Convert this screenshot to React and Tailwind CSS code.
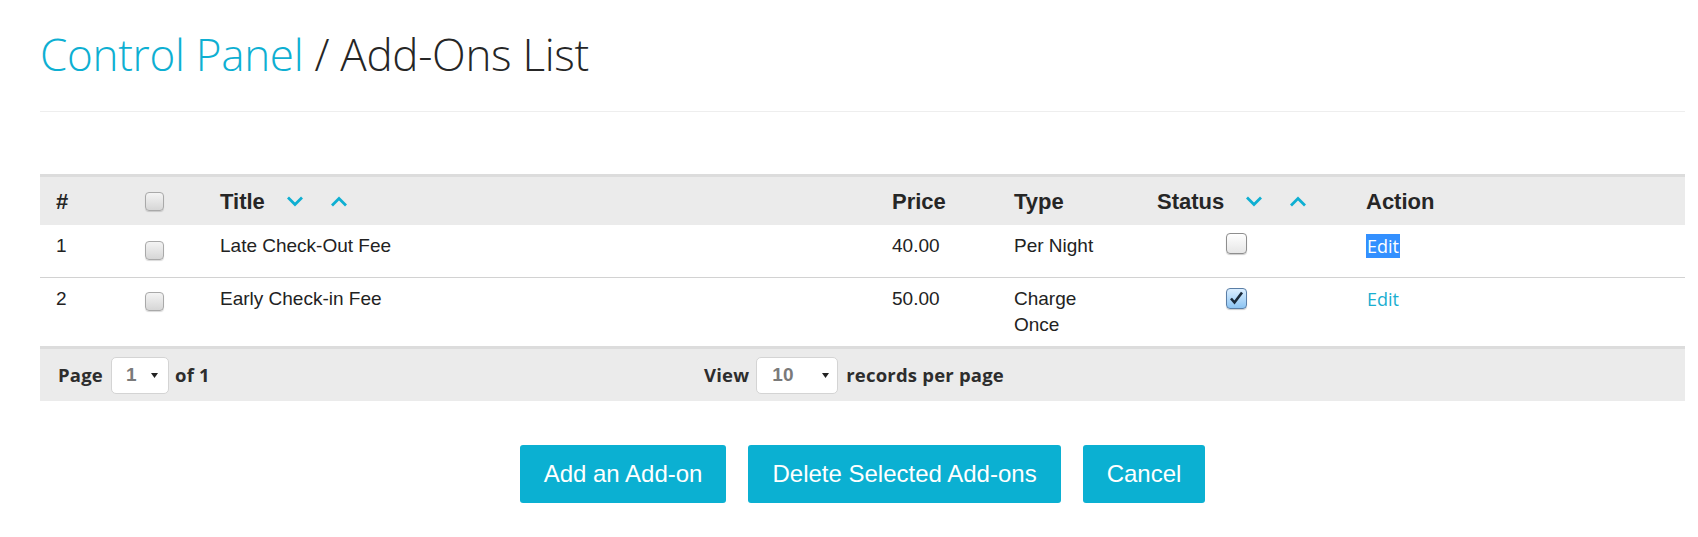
import React from "react";

const Chevron = ({ up }) => (
  <svg width="18" height="11" viewBox="0 0 18 11" className="block">
    <polyline
      points={up ? "2,9.5 9,2.5 16,9.5" : "2,1.5 9,8.5 16,1.5"}
      fill="none"
      stroke="#0eafd2"
      strokeWidth="2.8"
      strokeLinecap="butt"
      strokeLinejoin="miter"
    />
  </svg>
);

const SortArrows = () => (
  <div className="flex items-center gap-[26px] ml-[21px]">
    <Chevron />
    <Chevron up />
  </div>
);

const GrayBox = () => (
  <div className="w-[19px] h-[19px] rounded-[4px] border border-[#a9a9a9] bg-gradient-to-b from-[#f4f4f4] to-[#d6d6d6] shadow-[0_1px_1px_rgba(0,0,0,0.15)]" />
);

const StatusBox = ({ checked }) =>
  checked ? (
    <div className="relative w-[21px] h-[21px] rounded-[4px] border border-[#5a7ea6] bg-gradient-to-b from-[#dcefff] to-[#8cc4f2] shadow-[0_1px_1px_rgba(0,0,0,0.2)]">
      <svg width="21" height="21" viewBox="0 0 21 21" className="absolute -left-px -top-px">
        <path d="M5 10.5 L8.5 14.5 L16 4.5" fill="none" stroke="#1b2a3a" strokeWidth="2.6" />
      </svg>
    </div>
  ) : (
    <div className="w-[21px] h-[21px] rounded-[4px] border border-[#8e8e8e] bg-gradient-to-b from-[#ffffff] to-[#e6e6e6] shadow-[0_1px_1px_rgba(0,0,0,0.2)]" />
  );

const Caret = () => (
  <svg width="7" height="5" viewBox="0 0 7 5" className="block">
    <polygon points="0,0 7,0 3.5,5" fill="#222" />
  </svg>
);

const cols = "grid grid-cols-[89px_75px_672px_122px_143px_209px_1fr] pl-[16px]";

export default function App() {
  return (
    <div className="bg-white min-h-[537px] pl-[40px] pr-[13px] pt-[30px] text-[#333]">
      <h1
        className="text-[44px] leading-[48px] font-light tracking-[-0.3px]"
        style={{ fontFamily: '"Open Sans", sans-serif' }}
      >
        <span className="text-[#0eafd2]">Control Panel</span>
        <span className="text-[#262626]"> / Add-Ons List</span>
      </h1>
      <div className="mt-[33px] h-px bg-[#eeeeee]" />

      <div className="mt-[62px]" style={{ fontFamily: '"Liberation Sans", Arial, sans-serif' }}>
        {/* header */}
        <div className={`${cols} border-t-[3px] border-[#dcdcdc] bg-[#ebebeb] h-[51px] items-center text-[22px] font-bold text-[#262626]`}>
          <div>#</div>
          <div><GrayBox /></div>
          <div className="flex items-center">Title<SortArrows /></div>
          <div>Price</div>
          <div>Type</div>
          <div className="flex items-center">Status<SortArrows /></div>
          <div>Action</div>
        </div>

        {/* row 1 */}
        <div className={`${cols} h-[53px] border-b border-[#d2d2d2] pt-[8px] text-[19px] leading-[26px] text-[#222]`}>
          <div>1</div>
          <div className="pt-[8px]"><GrayBox /></div>
          <div>Late Check-Out Fee</div>
          <div>40.00</div>
          <div className="max-w-[100px]">Per Night</div>
          <div className="pl-[69px]"><StatusBox /></div>
          <div style={{ fontFamily: '"Open Sans", sans-serif' }} className="text-[18px] leading-[27px]">
            <span className="bg-[#3390ff] text-white px-[1px]">Edit</span>
          </div>
        </div>

        {/* row 2 */}
        <div className={`${cols} h-[68px] pt-[8px] text-[19px] leading-[26px] text-[#222]`}>
          <div>2</div>
          <div className="pt-[6px]"><GrayBox /></div>
          <div>Early Check-in Fee</div>
          <div>50.00</div>
          <div className="max-w-[100px]">Charge Once</div>
          <div className="pl-[69px] pt-[2px]"><StatusBox checked /></div>
          <div style={{ fontFamily: '"Open Sans", sans-serif' }} className="text-[18px] leading-[27px] text-[#1aaed0]">
            <span className="px-[1px]">Edit</span>
          </div>
        </div>

        {/* footer */}
        <div
          className="flex items-center border-t-[3px] border-[#dcdcdc] bg-[#ebebeb] h-[55px] pl-[18px] text-[18.5px] tracking-[0.2px] font-bold text-[#2d2d2d]"
          style={{ fontFamily: '"Open Sans", sans-serif' }}
        >
          <div className="flex items-center w-[646px]">
            <span>Page</span>
            <div className="ml-[8px] mr-[6px] w-[58px] h-[37px] rounded-[5px] border border-[#d4d4d4] bg-white flex items-center justify-between pl-[14px] pr-[10px]">
              <span className="text-[19px] font-bold text-[#7a7a7a]" style={{ fontFamily: '"Liberation Sans", Arial, sans-serif' }}>1</span>
              <Caret />
            </div>
            <span>of 1</span>
          </div>
          <div className="flex items-center">
            <span>View</span>
            <div className="ml-[7px] mr-[8px] w-[82px] h-[37px] rounded-[5px] border border-[#d4d4d4] bg-white flex items-center justify-between pl-[15px] pr-[8px]">
              <span className="text-[19px] font-bold text-[#7a7a7a]" style={{ fontFamily: '"Liberation Sans", Arial, sans-serif' }}>10</span>
              <Caret />
            </div>
            <span>records per page</span>
          </div>
        </div>

        {/* buttons */}
        <div className="mt-[44px] flex justify-center gap-[22px] text-[24px] text-white">
          <button className="h-[58px] px-[24px] rounded-[3px] bg-[#0bb0d2]">Add an Add-on</button>
          <button className="h-[58px] px-[24px] rounded-[3px] bg-[#0bb0d2]">Delete Selected Add-ons</button>
          <button className="h-[58px] px-[24px] rounded-[3px] bg-[#0bb0d2]">Cancel</button>
        </div>
      </div>
    </div>
  );
}
